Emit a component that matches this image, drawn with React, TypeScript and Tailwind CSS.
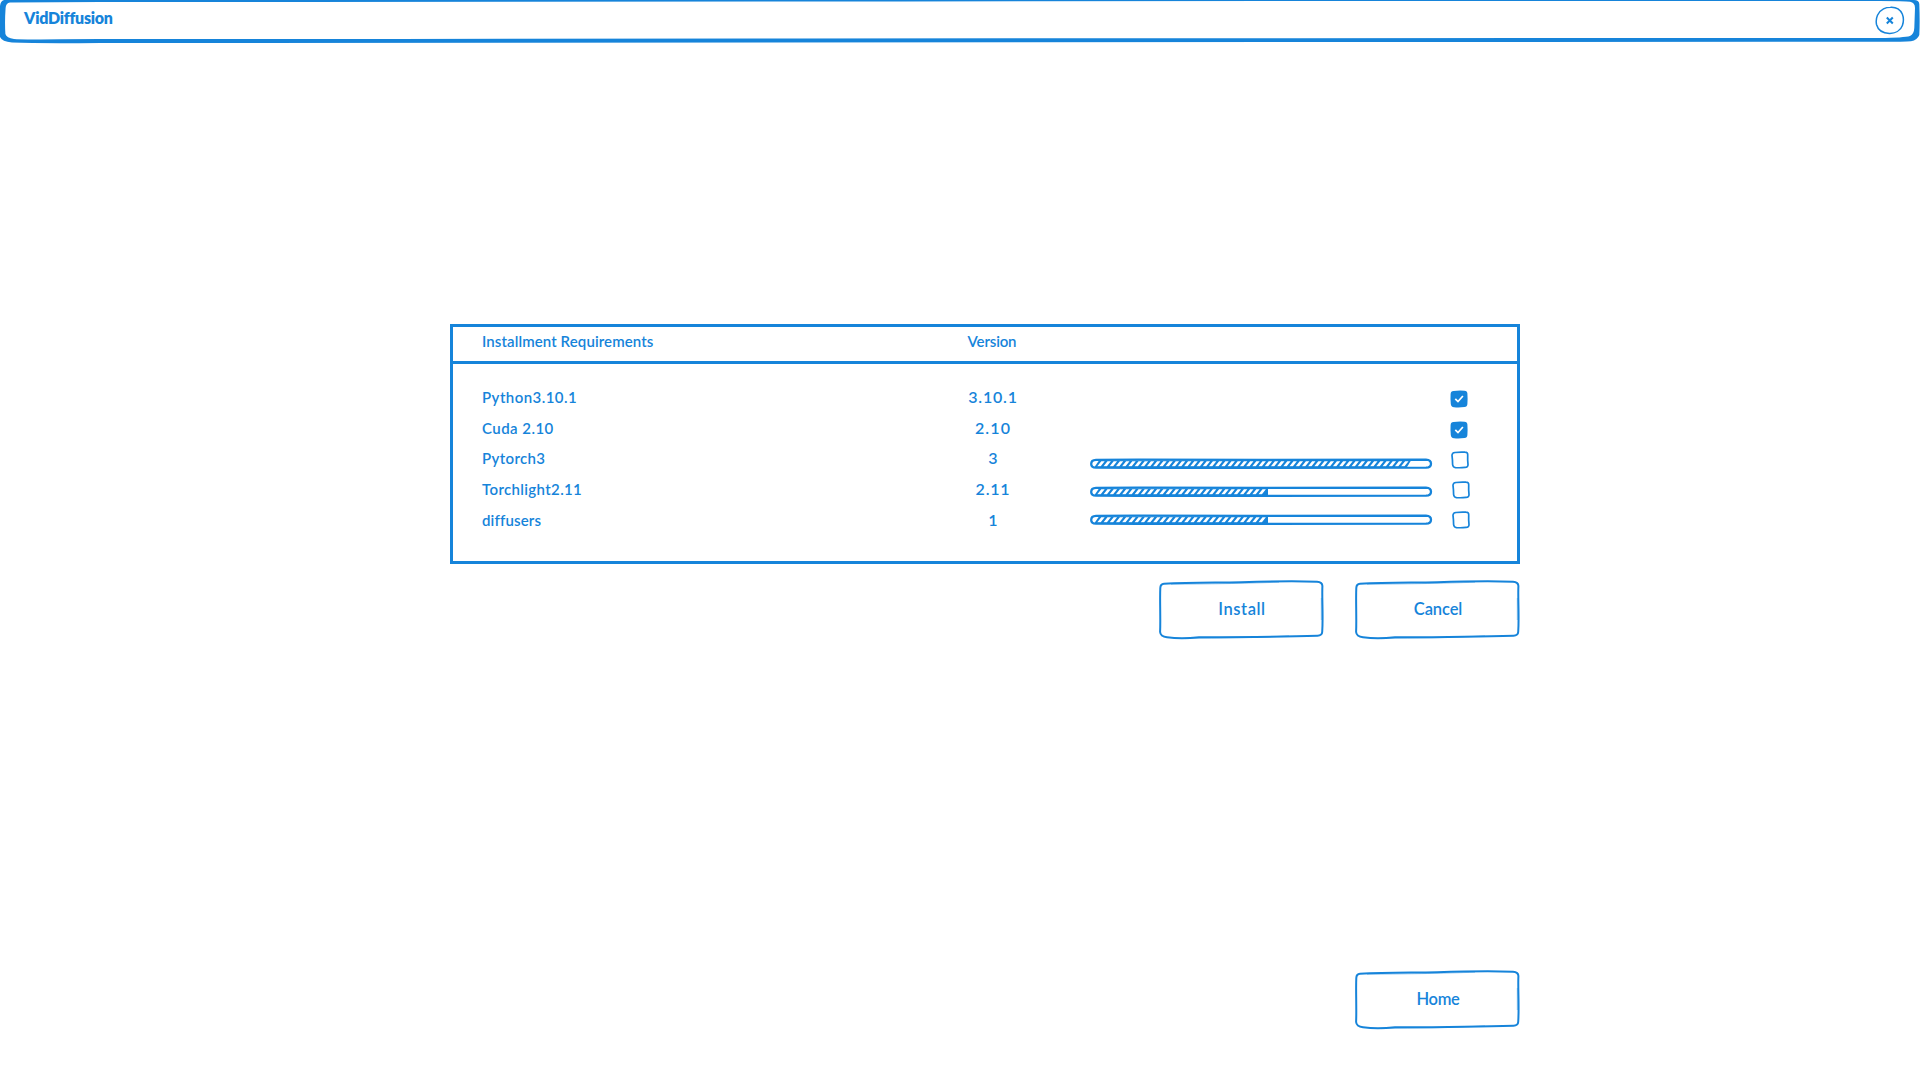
import type { ReactNode } from "react";

type Row = {
  name: string;
  nameClass: string;
  version: string;
  versionClass: string;
};

const rows: Row[] = [
  { name: "Python3.10.1", nameClass: "h-[31px] tracking-[0.45px]", version: "3.10.1", versionClass: "h-[31px] tracking-[0.8px]" },
  { name: "Cuda 2.10", nameClass: "h-[30px] tracking-[0.45px]", version: "2.10", versionClass: "h-[30px] tracking-[1.1px]" },
  { name: "Pytorch3", nameClass: "h-[31px] tracking-[0.35px]", version: "3", versionClass: "h-[31px]" },
  { name: "Torchlight2.11", nameClass: "h-[31px] tracking-[0.35px]", version: "2.11", versionClass: "h-[31px] tracking-[0.8px]" },
  { name: "diffusers", nameClass: "h-[31px] tracking-[0.15px]", version: "1", versionClass: "h-[31px]" },
];

function HeaderFrame() {
  return (
    <svg className="absolute inset-0" width="1920" height="44" viewBox="0 0 1920 44" fill="currentColor">
      <path
        fillRule="evenodd"
        d="M4 0 H1914 Q1919 0 1919.3 4 Q1920 22 1919.3 35 Q1917.500 40 1911 41.300 Q1905 41.800 1880 41.800 L1300 42 L500 42.700 L100 43 Q40 43.600 12 42.600 Q2 41.500 0 37 V6 Q0.500 1 4 0 Z
        M10 2.400 Q5.800 3 5.600 8 Q4.600 22 5.400 34 Q6.500 38 14 39 Q20 39.700 60 39.300 L100 39 L400 39 L800 38.500 L1300 38.200 L1880 38 Q1904 37.800 1910 36 Q1914 34 1914.300 28 L1915 8 Q1915 2.500 1910 1.800 Q1905 1.100 1880 1.100 L1300 1.100 L900 1.400 L300 1.900 L100 2 Z"
      />
    </svg>
  );
}

function CloseButton() {
  return (
    <button className="absolute top-[6px] right-[15px] size-[30px]" aria-label="Close">
      <svg width="30" height="30" viewBox="0 0 30 30" fill="none" stroke="currentColor">
        <path
          strokeWidth="1.500"
          d="M15.500 1.300 C20.500 1 25 3.200 27.300 8 C28.700 11.500 28.600 16 27.400 19.500 C25.500 24.800 20 27.500 14.500 27.400 C8 27.300 3 24 1.500 18.500 C0.300 12 3 5.500 8.500 2.800 C10.500 1.800 13 1.300 15.500 1.300 Z"
        />
        <path strokeWidth="2" d="M11.800 11.500 L17.800 17.500 M17.800 11.500 L11.800 17.500" />
      </svg>
    </button>
  );
}

function SketchButton({ children }: { children: ReactNode }) {
  return (
    <button className="relative flex h-[60px] w-[165px] items-center justify-center pb-[2px] pl-px text-[16.500px] font-semibold">
      <svg className="absolute inset-0" width="165" height="60" viewBox="0 0 165 60" fill="none" stroke="currentColor">
        <path
          strokeWidth="2"
          d="M5 3.800 C30 2.600 50 2.800 82 2.300 C110 1.300 135 0.800 158 1.700 Q163.300 2 163.400 6 C162.800 18 164.300 36 163.200 52 Q163 55.500 158.500 55.700 C120 57 70 57.200 40 57.300 C28 58.500 18 58.600 8 57.300 Q1.500 56.500 1.100 52 C1.700 38 0.700 20 1.300 8 Q1.400 4.200 5 3.800 Z"
        />
        <path strokeWidth="0.600" opacity="0.7" d="M12 4.300 C60 3.900 90 3.300 120 2.200 M162.300 18 V40 M26 58.600 C60 58 100 57.900 130 55.800" />
      </svg>
      {children}
    </button>
  );
}

function Progress({ end, divided }: { end: number; divided: boolean }) {
  const count = Math.floor((end - 13) / 6.2) + 1;
  const gaps = Array.from({ length: count }, (_, i) => i * 6.2);
  return (
    <svg className="block" width="343" height="12" viewBox="0 0 343 12" fill="none" stroke="currentColor">
      <path
        fill="currentColor"
        stroke="none"
        d={divided ? `M4.500 9 L9 2.500 H${end} V9 Z` : `M4.500 9 L9 2.500 H${end} L${end - 4} 9 Z`}
      />
      <path
        fill="white"
        stroke="none"
        d={gaps
          .map((x) => {
            const limit = end - 2;
            return `M${Math.min(x + 7.3, limit)} 8.300 L${Math.min(x + 11.3, limit)} 3.300 H${Math.min(x + 14.7, limit)} L${Math.min(x + 10.7, limit)} 8.300 Z`;
          })
          .join(" ")}
      />
      <path
        strokeWidth="2.300"
        d="M6 1.900 C60 1.400 110 2 171 1.900 C240 2.200 290 1.400 336 1.600 C339.500 1.800 341 3.600 341 5.700 C341 8.200 339.500 9.600 336 9.700 C290 10.100 240 9.800 171 9.900 C110 10.200 60 9.700 6 9.700 C2.600 9.500 1.200 8 1.200 5.900 C1.200 3.700 2.600 2 6 1.900 Z"
      />
    </svg>
  );
}

function Checkbox({ checked = false }: { checked?: boolean }) {
  return (
    <svg className="block" width="18" height="18" viewBox="0 0 18 18" fill="none" stroke="currentColor">
      {checked ? (
        <>
          <path
            fill="currentColor"
            stroke="none"
            d="M3.500 1 Q9 0.200 14.500 0.700 Q17.300 0.900 17.400 3.500 Q17.800 9 17.400 14 Q17.200 16.800 14.500 17 Q9 17.700 4 17.200 Q1 17 0.800 14 Q0.300 9 0.600 4 Q0.800 1.200 3.500 1 Z"
          />
          <path stroke="white" strokeWidth="1.700" d="M5.300 8.800 L8 11.600 L12.900 6" />
        </>
      ) : (
        <path
          strokeWidth="1.700"
          d="M4 1.500 Q9 0.900 14 1.200 Q16.900 1.300 16.700 4 Q16.500 9 17 13.500 Q17.100 16.300 14 16.400 Q9 17 4.500 16.600 Q1.900 16.300 1.600 13.500 Q1.600 9 1 4.300 Q1.100 1.800 4 1.500 Z"
        />
      )}
    </svg>
  );
}

export default function App() {
  return (
    <div className="h-[1082px] w-[1920px] overflow-hidden bg-white font-['Lato',sans-serif] text-[#1684da]">
      <header className="relative h-[44px] pt-[8px] pl-[24px]">
        <HeaderFrame />
        <h1 className="text-[16px] leading-[19px] font-extrabold tracking-[-0.25px]">VidDiffusion</h1>
        <CloseButton />
      </header>

      <main className="ml-[450px] w-[1070px] pt-[280px]">
        <section className="h-[240px] w-[1069.500px] border-[3px] border-[#1684da] text-[15px] font-semibold">
          <div className="flex h-[37px] items-center border-b-[3px] border-[#1684da] pb-[5px] pl-[29px]">
            <div className="w-[461px] tracking-[0.1px]">Installment Requirements</div>
            <div className="w-[98px] text-center tracking-[-0.15px]">Version</div>
          </div>

          <div className="flex pt-[18px] pl-[29px]">
            <ul className="w-[461px] leading-[31px]">
              {rows.map((row) => (
                <li key={row.name} className={row.nameClass}>
                  {row.name}
                </li>
              ))}
            </ul>
            <ul className="-mt-px w-[100px] text-center text-[16px] leading-[31px]">
              {rows.map((row) => (
                <li key={row.name} className={row.versionClass}>
                  {row.version}
                </li>
              ))}
            </ul>
            <div className="ml-[47px] flex w-[343px] flex-col gap-[16px] pt-[76px]">
              <Progress end={321} divided={false} />
              <Progress end={178} divided />
              <Progress end={178} divided />
            </div>
            <div className="ml-[17px] flex flex-col pt-[8px]">
              <Checkbox checked />
              <div className="mt-[13px]">
                <Checkbox checked />
              </div>
              <div className="mt-[12px] ml-px flex flex-col gap-[12px]">
                <Checkbox />
                <div className="ml-px">
                  <Checkbox />
                </div>
                <div className="ml-px">
                  <Checkbox />
                </div>
              </div>
            </div>
          </div>
        </section>

        <div className="mt-[16px] flex justify-end gap-[31px]">
          <SketchButton>
            <span className="tracking-[0.55px]">Install</span>
          </SketchButton>
          <SketchButton>
            <span className="tracking-[-0.1px]">Cancel</span>
          </SketchButton>
        </div>
        <div className="mt-[330px] flex justify-end">
          <SketchButton>
            <span className="tracking-[-0.3px]">Home</span>
          </SketchButton>
        </div>
      </main>
    </div>
  );
}
